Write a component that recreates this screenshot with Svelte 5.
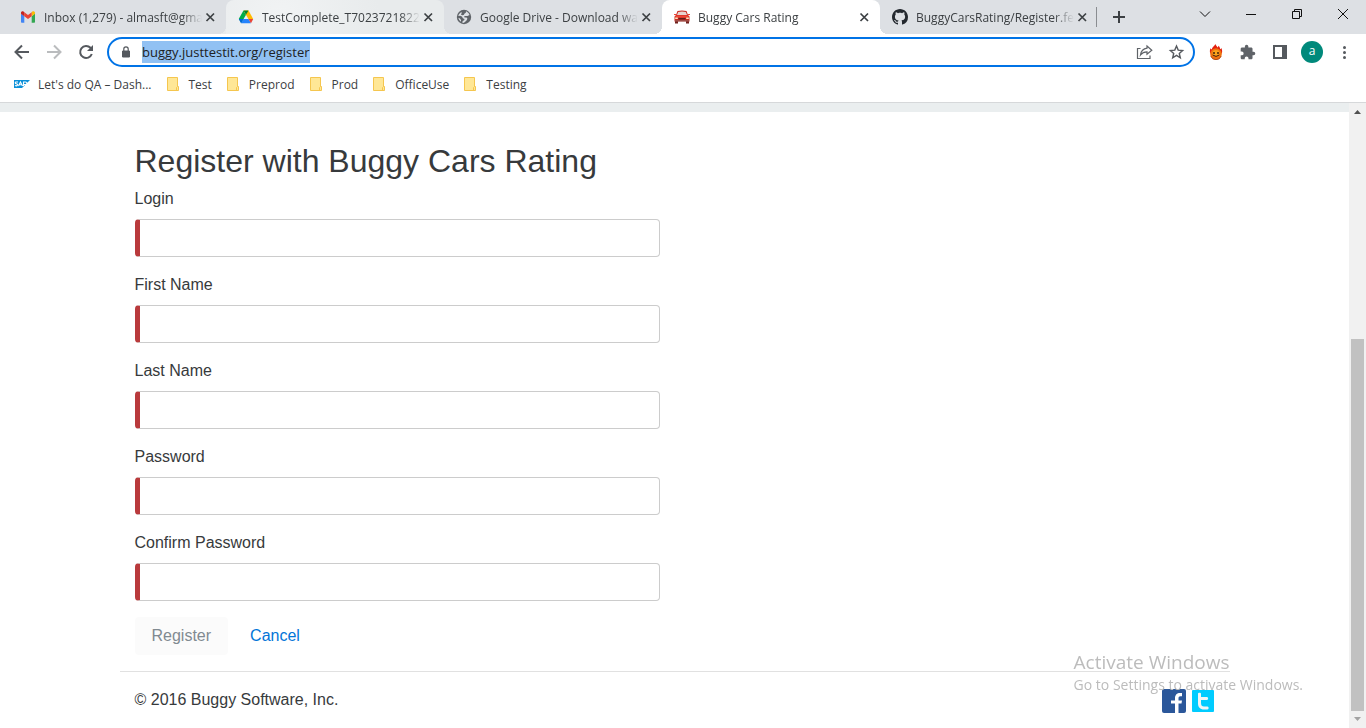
<script>
  let address = $state('buggy.justtestit.org/register');
  let addressInput;

  const tabs = [
    { icon: 'gmail', title: 'Inbox (1,279) - almasft@gma' },
    { icon: 'drive', title: 'TestComplete_T70237218226', state: 'hover' },
    { icon: 'globe', title: 'Google Drive - Download wa' },
    { icon: 'car', title: 'Buggy Cars Rating', state: 'active' },
    { icon: 'github', title: 'BuggyCarsRating/Register.fea' }
  ];

  const bookmarks = ['Test', 'Preprod', 'Prod', 'OfficeUse', 'Testing'];

  const fields = [
    { id: 'username', label: 'Login', type: 'text' },
    { id: 'firstName', label: 'First Name', type: 'text' },
    { id: 'lastName', label: 'Last Name', type: 'text' },
    { id: 'password', label: 'Password', type: 'password' },
    { id: 'confirmPassword', label: 'Confirm Password', type: 'password' }
  ];

  $effect(() => {
    addressInput.focus({ preventScroll: true });
    addressInput.select();
  });
</script>

<div class="window">
  <header class="chrome">
    <div class="tabstrip">
      <div class="tabs">
        {#each tabs as tab}
          <div class="tab {tab.state ?? ''}">
            {#if tab.icon === 'gmail'}
              <svg class="favicon" viewBox="0 0 16 16" aria-hidden="true">
                <path fill="#4285f4" d="M1 4.6v8.1c0 .6.4 1 1 1h2.3V7.2z" />
                <path fill="#34a853" d="M11.7 13.7H14c.6 0 1-.4 1-1V4.6l-3.3 2.6z" />
                <path fill="#fbbc04" d="M11.7 3.5v3.7L15 4.7V3.8c0-1.5-1.7-2.1-2.7-1.3z" />
                <path fill="#ea4335" d="M4.300 7.300V3.200L8 6l3.700-2.800v4.100L8 10.100z" />
                <path fill="#c5221f" d="M1 3.800v.9l3.300 2.600V3.200l-.6-.5C2.700 1.900 1 2.500 1 3.800z" />
              </svg>
            {:else if tab.icon === 'drive'}
              <svg class="favicon" viewBox="0 0 16 16" aria-hidden="true">
                <path fill="#00ac47" d="M5.500 1.500.8 9.800 3.300 14 8 5.700z" />
                <path fill="#ffba00" d="M5.500 1.500h5l4.700 8.500h-4.800z" />
                <path fill="#00832d" d="M5.500 1.500h5L8 5.700z" />
                <path fill="#2684fc" d="M5.300 10 3 14.200h10l-2.500-4.200z" />
                <path fill="#0066da" d="M.8 10h4.500L3 14.200z" />
                <path fill="#ea4335" d="M10.500 10h4.700L13 14.200z" />
              </svg>
            {:else if tab.icon === 'globe'}
              <svg class="favicon" viewBox="0 0 16 16" aria-hidden="true">
                <circle cx="8" cy="8" r="7.200" fill="#5f6368" />
                <path fill="#dde0e4" d="M10 2.300c1.700.7 3 2 3.500 3.700L11.500 7H9.200L8 7.600l.6.900h2l.8 1.300-.9 1.600-1.800 1.900-1.600.6-.8-.4.400-1.600 1.500-.7.300-1.200-1.600-.8-1-1.600-1.800-.8-1.800.1C2.600 5.500 3.900 3.900 5.500 3l.2 1.300-.8 1.300 1.300.7 1.500-.4.900-1.300 1.200-.8z" />
                <path fill="#dde0e4" d="m2.300 8.800 1.700.8 1 1.400v1.700a6 6 0 0 1-2.700-3.900z" />
              </svg>
            {:else if tab.icon === 'car'}
              <svg class="favicon" viewBox="0 0 16 16" aria-hidden="true">
                <path fill="#6f211c" d="M1 11h3v3.500H1zM12 11h3v3.500h-3z" />
                <path fill="#c92a20" d="M3.500 2Q8 1 12.500 2L14 6l1.500 1.500v5H.5v-5L2 6z" />
                <path fill="#e7d3cf" d="M4.200 3Q8 2.200 11.800 3L13 6H3z" />
                <path fill="#f04636" d="M2.300 6.500h11.400L15 8.500H1zM0 5h2v1H0zM14 5h2v1h-2z" />
                <path fill="#5b201c" d="M4.500 9h7v1.500h-7z" />
                <path fill="#ffe2ba" d="M1.200 8.500h2.600V10H1.200zM12.200 8.500h2.600V10h-2.600z" />
                <path fill="#77716f" d="M1 11.500h14v.8H1z" />
              </svg>
            {:else}
              <svg class="favicon" viewBox="0 0 16 16" aria-hidden="true">
                <path fill="#24292f" fill-rule="evenodd" d="M8 0C3.580 0 0 3.580 0 8c0 3.540 2.290 6.530 5.470 7.590.4.070.55-.17.55-.38 0-.19-.01-.82-.01-1.490-2.010.37-2.530-.49-2.690-.94-.09-.23-.48-.94-.82-1.130-.28-.15-.68-.52-.01-.53.630-.01 1.080.58 1.230.82.720 1.210 1.870.87 2.330.66.070-.52.280-.87.510-1.070-1.780-.2-3.640-.89-3.640-3.950 0-.87.310-1.590.82-2.150-.08-.2-.36-1.020.08-2.120 0 0 .67-.21 2.200.82.640-.18 1.320-.27 2-.27s1.360.09 2 .27c1.530-1.040 2.200-.82 2.200-.82.440 1.100.160 1.920.080 2.120.510.560.820 1.270.820 2.150 0 3.070-1.870 3.750-3.650 3.950.290.250.540.730.540 1.480 0 1.070-.01 1.930-.01 2.200 0 .210.150.460.550.380A8.010 8.010 0 0 0 16 8c0-4.420-3.580-8-8-8z" />
              </svg>
            {/if}
            <span class="title">{tab.title}</span>
            <button class="close" aria-label="Close tab">
              <svg width="16" height="16" viewBox="0 0 16 16"><path d="m4.500 4.500 7.500 7.500M12 4.500 4.500 12" stroke="#3c4043" stroke-width="1.700" /></svg>
            </button>
          </div>
        {/each}
        <span class="divider"></span>
        <button class="new-tab" aria-label="New tab">
          <svg width="28" height="28" viewBox="0 0 28 28"><path d="M14 8v12M8 14h12" stroke="#3c4043" stroke-width="2" /></svg>
        </button>
      </div>
      <div class="controls">
        <button aria-label="Search tabs"><svg width="12" height="12" viewBox="0 0 12 12"><path d="m1 3.500 5 5 5-5" /></svg></button>
        <button aria-label="Minimize"><svg width="12" height="12" viewBox="0 0 12 12"><path d="M1 6.500h10" /></svg></button>
        <button aria-label="Restore"><svg width="12" height="12" viewBox="0 0 12 12"><path d="M1.500 3.500h7v7h-7zM3.500 3.500v-2h7v7h-2" /></svg></button>
        <button aria-label="Close"><svg width="12" height="12" viewBox="0 0 12 12"><path d="m1 1 10 10M11 1 1 11" /></svg></button>
      </div>
    </div>

    <div class="toolbar">
      <button class="tool" aria-label="Back">
        <svg width="20" height="20" viewBox="0 0 20 20"><path d="M17 10H4M10 3.500 3.500 10l6.500 6.500" fill="none" stroke="#55595e" stroke-width="2" /></svg>
      </button>
      <button class="tool" aria-label="Forward">
        <svg width="20" height="20" viewBox="0 0 20 20"><path d="M3 10h13M10 3.500l6.500 6.500-6.500 6.500" fill="none" stroke="#babcbe" stroke-width="2" /></svg>
      </button>
      <button class="tool" aria-label="Reload">
        <svg width="20" height="20" viewBox="0 0 20 20"><path d="M15.800 12a6 6 0 1 1-1.300-6.200L16 7.300" fill="none" stroke="#55595e" stroke-width="2" /><path d="M17 3v6h-6z" fill="#55595e" /></svg>
      </button>
      <div class="omnibox">
        <svg width="16" height="16" viewBox="0 0 16 16" aria-hidden="true"><path d="M4.500 7h7v6h-7z" fill="#55595e" stroke="#55595e" stroke-linejoin="round" /><path d="M5.800 7V5a2.200 2.200 0 0 1 4.400 0v2" fill="none" stroke="#55595e" stroke-width="1.200" /></svg>
        <input aria-label="Address and search bar" spellcheck="false" bind:value={address} bind:this={addressInput} />
        <button class="tool" aria-label="Share this page">
          <svg width="18" height="18" viewBox="0 0 18 18" fill="none" stroke="#5f6368" stroke-width="1.200"><path d="M4.500 5.500h-3v10h12.500v-3" /><path d="M11 3l4.800 4.200L11 11.300V8.900C8 8.900 6 10 4.500 12 5 8.400 7 5.700 11 5.200z" /></svg>
        </button>
        <button class="tool" aria-label="Bookmark this tab">
          <svg width="18" height="18" viewBox="0 0 18 18"><path d="m8.500 3 1.700 4.100 4.400.4-3.300 2.900 1 4.400-3.800-2.400-3.800 2.400 1-4.400-3.300-2.900 4.400-.4z" fill="none" stroke="#55595e" stroke-width="1.400" /></svg>
        </button>
      </div>
      <button class="tool" aria-label="Flame extension">
        <svg width="16" height="16" viewBox="0 0 16 16">
          <path fill="#e3200f" d="M7.500 0c.2 1.300 1.500 2 2 3.500.6-.4.900-1 .9-1.800 1.300 1 1.700 2.300 1.700 3.500.6-.2 1-.6 1.300-1.200 1 2.500.9 4 .4 5.500H2.200C1.700 7.500 1.800 6 2.500 4.300c.3.700.8 1.100 1.300 1.200C3.900 3 6.300 2.300 7.500 0z" />
          <circle cx="8" cy="10" r="5.800" fill="#f0730f" />
          <ellipse cx="8" cy="9" rx="3.500" ry="3" fill="#fba51c" />
          <path d="M2.800 12a5.500 5.500 0 0 0 10.400 0" fill="none" stroke="#b04a17" />
          <circle cx="6" cy="9" r="1" fill="#42200d" /><circle cx="10" cy="9" r="1" fill="#42200d" />
          <path d="M4.700 11q3.300 2.800 6.600 0" fill="none" stroke="#42200d" />
        </svg>
      </button>
      <button class="tool" aria-label="Extensions">
        <svg width="16" height="16" viewBox="1 0 23 23"><path fill="#5f6368" d="M20.500 11H19V7c0-1.100-.9-2-2-2h-4V3.500a2.500 2.500 0 0 0-5 0V5H4c-1.100 0-2 .9-2 2v3.800h1.500a2.700 2.700 0 0 1 0 5.400H2V20c0 1.100.9 2 2 2h3.800v-1.500a2.700 2.700 0 0 1 5.400 0V22H17c1.100 0 2-.9 2-2v-4h1.500a2.500 2.500 0 0 0 0-5z" /></svg>
      </button>
      <button class="tool" aria-label="Side panel">
        <svg width="16" height="16" viewBox="0 0 16 16"><path d="M2 2h12v12H2z" fill="none" stroke="#55595e" stroke-width="2" /><path d="M10 2h4v12h-4z" fill="#55595e" /></svg>
      </button>
      <button class="tool" aria-label="Profile"><span class="avatar">a</span></button>
      <button class="tool" aria-label="Menu">
        <svg width="16" height="16" viewBox="0 0 16 16" fill="#55595e"><circle cx="8.500" cy="3.500" r="1.500" /><circle cx="8.500" cy="8.500" r="1.500" /><circle cx="8.500" cy="13.500" r="1.500" /></svg>
      </button>
    </div>

    <nav class="bookmarks">
      <a href="#sap">
        <svg width="16" height="16" viewBox="0 0 16 16" aria-hidden="true"><path fill="#0a8fd8" d="M0 4h16l-8 8H0z" /><path d="M4 6H2C1 6 1 7.500 2 7.700s2 .300 1.500 1.300S2 10 1 9.500M4.500 10 6.500 6l2 4M5.500 8.800h2M9.500 10V6h2c2 0 2 2.500 0 2.500h-2" fill="none" stroke="#fff" stroke-width="1.100" /></svg>
        Let's do QA – Dash...
      </a>
      {#each bookmarks as name}
        <a href="#{name}">
          <svg width="16" height="16" viewBox="0 0 16 16" aria-hidden="true"><path d="M2.500 1.500h10v9h1v4h-11z" fill="#ffe796" stroke="#f5c64f" /><path d="M11.500 14.500v-3l1-1" fill="none" stroke="#f5c64f" /></svg>
          {name}
        </a>
      {/each}
    </nav>
  </header>

  <div class="viewport">
    <div class="page">
      <div class="band"></div>
      <main class="container">
        <form class="register">
          <h2>Register with Buggy Cars Rating</h2>
          {#each fields as field}
            <div class="group">
              <label for={field.id}>{field.label}</label>
              <input id={field.id} type={field.type} autocomplete="off" />
            </div>
          {/each}
          <div class="actions">
            <button type="submit" disabled>Register</button>
            <a href="#home">Cancel</a>
          </div>
        </form>
        <footer>
          <p>© 2016 Buggy Software, Inc.</p>
          <div class="social">
            <a href="#facebook" aria-label="Facebook">
              <svg width="24" height="24" viewBox="0 0 24 24"><rect width="24" height="24" rx="2" fill="#2b579a" /><path fill="#fff" d="M13 24v-9.500h-4v-3h4V9.300C13 5.900 15 4 18 4h2v3.200h-1.500c-1.500 0-2 .800-2 2v2.300H20l-.5 3h-3V24z" /></svg>
            </a>
            <a href="#twitter" aria-label="Twitter">
              <svg width="24" height="24" viewBox="0 0 24 24"><rect x="1" y="1" width="22" height="22" rx="1" fill="#00ccff" /><path fill="#f2f4f4" d="M7 4.500C7 3.500 10 3.500 10 4.500V8h6c1.500 0 1.500 3 0 3h-6v3c0 2.500 1 3.500 3 3.500h3.500c1.500 0 1.500 3 0 3H13c-4 0-6-2.500-6-6z" /></svg>
            </a>
          </div>
        </footer>
      </main>
    </div>
    <div class="scrollbar" aria-hidden="true">
      <svg width="17" height="17" viewBox="0 0 17 17"><path d="M5 11h7L8.500 7z" fill="#505050" /></svg>
      <div class="track"><div class="thumb"></div></div>
      <svg width="17" height="17" viewBox="0 0 17 17"><path d="M5 6h7l-3.500 4z" fill="#a3a3a3" /></svg>
    </div>
  </div>

  <aside class="activation">
    <strong>Activate Windows</strong>
    <span>Go to Settings to activate Windows.</span>
  </aside>
</div>

<style>
  :global(body) {
    margin: 0;
    background: #fff;
  }

  .window {
    display: flex;
    flex-direction: column;
    min-height: 100vh;
    font-family: 'Segoe UI', 'Open Sans', 'Noto Sans', sans-serif;
    font-size: 12px;
    color: #3c4043;
  }

  .window :global(*) {
    box-sizing: border-box;
  }

  svg {
    display: block;
    flex: none;
  }

  button {
    padding: 0;
    border: 0;
    background: none;
    font: inherit;
    color: inherit;
  }

  a {
    text-decoration: none;
    color: inherit;
  }

  .tabstrip {
    display: flex;
    height: 34px;
    background: #dde0e4;
  }

  .tabs {
    display: flex;
    flex: 1;
    min-width: 0;
    align-items: center;
    padding-left: 8px;
  }

  .tab {
    display: flex;
    position: relative;
    flex: 0 1 218px;
    min-width: 0;
    height: 34px;
    align-items: center;
    padding: 0 8px 0 12px;
    border-radius: 8px 8px 0 0;
  }

  .tab.hover {
    background: radial-gradient(circle at 25% 50%, #f1f3f4, #e8ebec 60%);
  }

  .tab.active {
    background: #fff;
  }

  .tab.hover::before,
  .tab.hover::after,
  .tab.active::before,
  .tab.active::after {
    content: '';
    position: absolute;
    bottom: 0;
    width: 8px;
    height: 8px;
    color: #fff;
  }

  .tab.hover::before,
  .tab.hover::after {
    color: #e8ebec;
  }

  .tab::before {
    left: -8px;
    background: radial-gradient(circle at 0 0, transparent 8px, currentColor 8px);
  }

  .tab::after {
    right: -8px;
    background: radial-gradient(circle at 100% 0, transparent 8px, currentColor 8px);
  }

  .favicon {
    width: 16px;
    height: 16px;
  }

  .title {
    flex: 1;
    min-width: 0;
    margin-left: 8px;
    overflow: hidden;
    white-space: nowrap;
    mask-image: linear-gradient(to left, transparent, #000 20px);
  }

  .divider {
    width: 1px;
    height: 20px;
    margin: 0 8px 0 -2px;
    background: #8a8d91;
  }

  .controls {
    display: flex;
    height: 28px;
  }

  .controls button {
    display: grid;
    width: 46px;
    place-items: center;
  }

  .controls svg {
    fill: none;
    stroke: #111;
  }

  .toolbar {
    display: flex;
    height: 36px;
    align-items: center;
    padding: 0 6px;
  }

  .tool {
    display: grid;
    flex: none;
    width: 32px;
    height: 28px;
    place-items: center;
  }

  .omnibox {
    display: flex;
    flex: 1;
    min-width: 0;
    height: 30px;
    align-items: center;
    margin: 0 5px;
    border: 2px solid #0073e6;
    border-radius: 15px;
    padding-left: 9px;
  }

  .omnibox input {
    flex: 1;
    min-width: 0;
    height: 22px;
    margin-left: 8px;
    padding: 0;
    border: 0;
    outline: 0;
    background: none;
    font: 13px/22px 'Segoe UI', 'Open Sans', 'Noto Sans', sans-serif;
    color: #202124;
  }

  .omnibox input::selection {
    background: #91c1f3;
    color: #202124;
  }

  .avatar {
    width: 22px;
    height: 22px;
    border-radius: 50%;
    background: #00897b;
    color: #fff;
    line-height: 20px;
    text-align: center;
  }

  .bookmarks {
    display: flex;
    height: 33px;
    align-items: center;
    gap: 13px;
    padding: 0 14px 4px;
    border-bottom: 1px solid #d6d8da;
  }

  .bookmarks a {
    display: flex;
    align-items: center;
    gap: 8px;
    white-space: nowrap;
  }

  .viewport {
    display: flex;
    flex: 1;
  }

  .page {
    flex: 1;
    min-width: 0;
    font: 16px/24px 'Liberation Sans', Arial, sans-serif;
    color: #373a3c;
  }

  .band {
    height: 9px;
    background: #eaeeef;
  }

  .container {
    max-width: 1140px;
    margin: 0 auto;
    padding: 32px 15px 0;
  }

  .register {
    width: 50%;
    padding: 0 15px;
  }

  h2 {
    margin: 0 0 8px;
    font-size: 32px;
    font-weight: 400;
    line-height: 35px;
    white-space: nowrap;
  }

  .group {
    display: flex;
    flex-direction: column;
    gap: 8px;
    margin-bottom: 16px;
  }

  .group input {
    height: 38px;
    padding: 6px 12px;
    border: 1px solid #ccc;
    border-left: 5px solid #b93a3c;
    border-radius: 4px;
    outline: 0;
    font: inherit;
    color: #55595c;
  }

  .actions {
    display: flex;
    gap: 5px;
    margin-bottom: 16px;
  }

  .actions button,
  .actions a {
    padding: 6px 16px;
    border: 1px solid transparent;
    border-radius: 4px;
  }

  .actions button {
    background: #fbfbfb;
    color: #818a91;
  }

  .actions a {
    color: #0275d8;
  }

  footer {
    display: flex;
    align-items: flex-start;
    justify-content: space-between;
    padding: 16px 15px 0;
    border-top: 1px solid #e1e1e1;
  }

  footer p {
    margin: 0;
  }

  .social {
    display: flex;
    gap: 5px;
    padding-top: 1px;
  }

  .scrollbar {
    display: flex;
    flex: none;
    flex-direction: column;
    width: 17px;
    background: #f1f1f1;
  }

  .track {
    display: flex;
    flex: 1;
    flex-direction: column;
    justify-content: flex-end;
    padding: 0 2px;
  }

  .thumb {
    height: 63%;
    background: #c1c1c1;
  }

  .activation {
    display: flex;
    position: fixed;
    right: 63px;
    bottom: 33px;
    flex-direction: column;
    color: #bcbcbc;
    pointer-events: none;
  }

  .activation strong {
    font-size: 19px;
    font-weight: 400;
    line-height: 26px;
  }

  .activation span {
    font-size: 14px;
    line-height: 20px;
  }
</style>
